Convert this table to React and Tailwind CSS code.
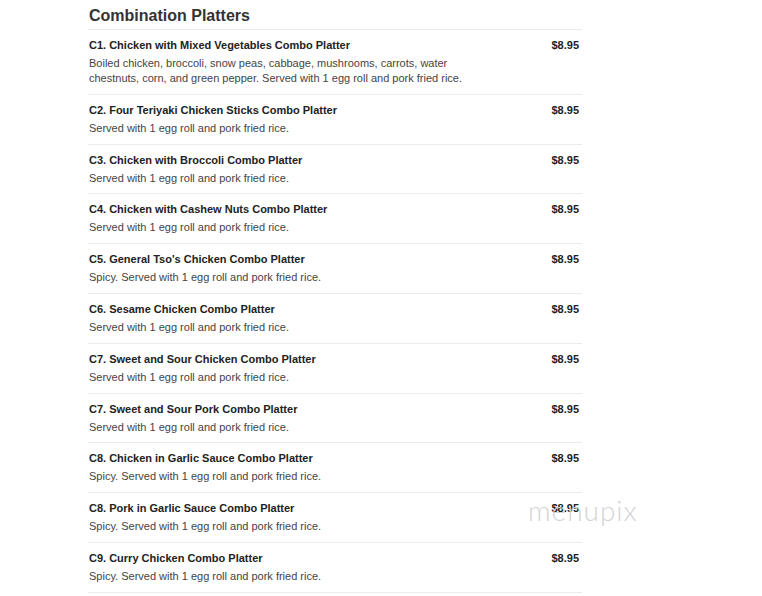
import React from "react";

const items = [
  { name: "C1. Chicken with Mixed Vegetables Combo Platter", desc: "Boiled chicken, broccoli, snow peas, cabbage, mushrooms, carrots, water chestnuts, corn, and green pepper. Served with 1 egg roll and pork fried rice." },
  { name: "C2. Four Teriyaki Chicken Sticks Combo Platter", desc: "Served with 1 egg roll and pork fried rice." },
  { name: "C3. Chicken with Broccoli Combo Platter", desc: "Served with 1 egg roll and pork fried rice." },
  { name: "C4. Chicken with Cashew Nuts Combo Platter", desc: "Served with 1 egg roll and pork fried rice." },
  { name: "C5. General Tso's Chicken Combo Platter", desc: "Spicy. Served with 1 egg roll and pork fried rice." },
  { name: "C6. Sesame Chicken Combo Platter", desc: "Served with 1 egg roll and pork fried rice." },
  { name: "C7. Sweet and Sour Chicken Combo Platter", desc: "Served with 1 egg roll and pork fried rice." },
  { name: "C7. Sweet and Sour Pork Combo Platter", desc: "Served with 1 egg roll and pork fried rice." },
  { name: "C8. Chicken in Garlic Sauce Combo Platter", desc: "Spicy. Served with 1 egg roll and pork fried rice." },
  { name: "C8. Pork in Garlic Sauce Combo Platter", desc: "Spicy. Served with 1 egg roll and pork fried rice." },
  { name: "C9. Curry Chicken Combo Platter", desc: "Spicy. Served with 1 egg roll and pork fried rice." },
];

export default function App() {
  return (
    <div className="relative w-[762px] h-[596px] bg-white overflow-hidden" style={{ fontFamily: '"Liberation Sans", Arial, sans-serif' }}>
      <div className="ml-[88px] w-[494px]">
        <h2 className="pl-[1px] pt-[6px] pb-[3px] text-[16px] leading-[20px] font-bold text-[#333]">Combination Platters</h2>
        {items.map((it, i) => (
          <div key={i} className="border-t border-[#ebebeb] pt-[7px] pb-[7.8px] flex justify-between">
            <div className="w-[400px] pl-[1px]">
              <div className="text-[11px] leading-[16px] font-bold text-[#222]">{it.name}</div>
              <div className="mt-[3px] text-[11px] leading-[15px] text-[#444]">{it.desc}</div>
            </div>
            <div className="pr-[3px] text-[11px] leading-[16px] font-bold text-[#222]">$8.95</div>
          </div>
        ))}
        <div className="border-t border-[#ebebeb]" />
      </div>
      <div className="absolute left-[528px] top-[494px] text-[28px] leading-[32px] tracking-[1px] text-[#d4d4d4] font-light" style={{ fontFamily: 'Lato, "DejaVu Sans", sans-serif' }}>menupix</div>
    </div>
  );
}
